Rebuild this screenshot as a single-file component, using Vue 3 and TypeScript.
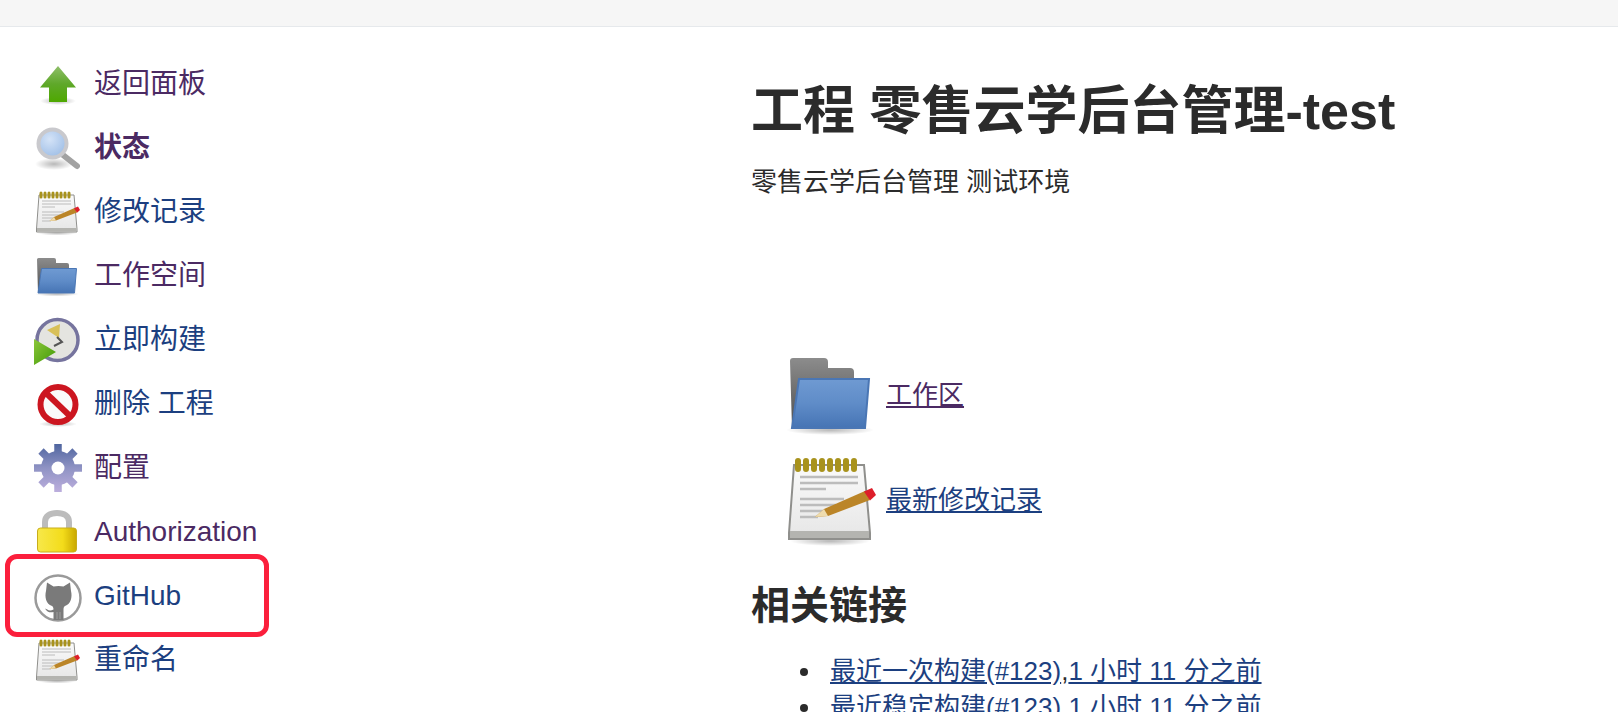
<template>
  <div class="page">
    <svg class="defs" width="0" height="0" aria-hidden="true">
      <defs>
        <linearGradient id="g-arrow" x1="0" y1="0" x2="0" y2="1">
          <stop offset="0" stop-color="#8fbf6a" />
          <stop offset="0.5" stop-color="#5fa82a" />
          <stop offset="1" stop-color="#4ea800" />
        </linearGradient>
        <linearGradient id="g-folder" x1="0" y1="0" x2="0" y2="1">
          <stop offset="0" stop-color="#6f9ad2" />
          <stop offset="0.5" stop-color="#5f8cc8" />
          <stop offset="1" stop-color="#4674b4" />
        </linearGradient>
        <linearGradient id="g-back" x1="0" y1="0" x2="0" y2="1">
          <stop offset="0" stop-color="#8c8c8c" />
          <stop offset="1" stop-color="#4e4e4e" />
        </linearGradient>
        <linearGradient id="g-lock" x1="0" y1="0" x2="1" y2="0">
          <stop offset="0" stop-color="#f7e84a" />
          <stop offset="0.65" stop-color="#f3dc1a" />
          <stop offset="1" stop-color="#c9a800" />
        </linearGradient>
        <linearGradient id="g-gear" gradientUnits="userSpaceOnUse" x1="0" y1="1" x2="0" y2="49">
          <stop offset="0" stop-color="#4f659f" />
          <stop offset="0.5" stop-color="#8f93c4" />
          <stop offset="1" stop-color="#bcaedd" />
        </linearGradient>
        <linearGradient id="g-page" x1="0" y1="0" x2="0" y2="1">
          <stop offset="0" stop-color="#fafafa" />
          <stop offset="1" stop-color="#e6e6e6" />
        </linearGradient>
        <linearGradient id="g-play" x1="0" y1="0" x2="1" y2="1">
          <stop offset="0" stop-color="#8cc63a" />
          <stop offset="1" stop-color="#3f9a06" />
        </linearGradient>
        <radialGradient id="g-lens" cx="0.4" cy="0.35" r="0.7">
          <stop offset="0" stop-color="#d4e3f7" />
          <stop offset="1" stop-color="#9dbde6" />
        </radialGradient>
        <radialGradient id="g-shadow">
          <stop offset="0" stop-color="#000" stop-opacity="0.28" />
          <stop offset="1" stop-color="#000" stop-opacity="0" />
        </radialGradient>

        <symbol id="i-up" viewBox="0 0 48 48" overflow="visible">
          <ellipse cx="24" cy="42" rx="18" ry="4" fill="url(#g-shadow)" />
          <path d="M24 7 42 28.500H33V43H15V28.500H6Z" fill="url(#g-arrow)" />
        </symbol>
        <symbol id="i-search" viewBox="0 0 48 48" overflow="visible">
          <ellipse cx="20" cy="41" rx="19" ry="6" fill="url(#g-shadow)" />
          <path d="M29 32 43 43" stroke="#a2a2a2" stroke-width="6" stroke-linecap="round" />
          <circle cx="18.500" cy="20.500" r="14" fill="url(#g-lens)" stroke="#c9c9cd" stroke-width="4" />
        </symbol>
        <symbol id="i-note" viewBox="0 0 48 48" overflow="visible">
          <ellipse cx="23" cy="46" rx="20" ry="2.500" fill="url(#g-shadow)" />
          <path d="M5 8H40L43 42V45H2.500V42Z" fill="url(#g-page)" stroke="#8f8f8c" />
          <path d="M3 41H42.500V44.500H3Z" fill="#b4b4b0" />
          <path d="M7 6V10M11 6V10M15 6V10M19 6V10M23 6V10M27 6V10M31 6V10M35 6V10"
            stroke="#a8921c" stroke-width="3" stroke-linecap="round" />
          <path d="M8 14H37M8 17H37M8 20H21M8 25H30M8 28H26M8 31H22M8 34H17" stroke="#bcbcbc" stroke-width="1.200" />
          <path d="M15.500 34 20 30 40.500 21 43 25.500 22 33.500Z" fill="#bb8528" />
          <path d="M15.500 34 20 30 22 33.500Z" fill="#efdcae" />
          <path d="M40 21.200 44 19.500 46 23 43 25.700Z" fill="#dd1e2a" />
        </symbol>
        <symbol id="i-folder" viewBox="0 0 48 48" overflow="visible">
          <ellipse cx="23" cy="43" rx="22" ry="2.500" fill="url(#g-shadow)" />
          <path d="M3 8.500Q3 7 4.500 7H20Q22 7 22 9V12H33Q35 12 35 14V42H4Z" fill="url(#g-back)" />
          <path d="M7.500 17.500H42.500L40.500 42H4Z" fill="url(#g-folder)" stroke="#4a76b4" stroke-width="1" />
        </symbol>
        <symbol id="i-build" viewBox="0 0 48 48" overflow="visible">
          <circle cx="23.500" cy="25" r="20.500" fill="#e4e4e0" stroke="#76749e" stroke-width="3.500" />
          <path d="M13 15 26 9 25 23Z" fill="#d8c058" />
          <path d="M23 22 28 27 20 31" fill="none" stroke="#555" stroke-width="2" />
          <path d="M0 24 22 37 0 50Z" fill="url(#g-play)" />
        </symbol>
        <symbol id="i-stop" viewBox="0 0 48 48" overflow="visible">
          <ellipse cx="24" cy="45" rx="19" ry="3" fill="url(#g-shadow)" />
          <circle cx="24" cy="25.500" r="17.500" fill="#fafafa" stroke="#cc1620" stroke-width="6" />
          <path d="M12 14 36 37" stroke="#cc1620" stroke-width="6" />
        </symbol>
        <symbol id="i-gear" viewBox="0 0 48 48" overflow="visible">
          <circle cx="24" cy="25" r="17" fill="url(#g-gear)" />
          <path d="M24 1V49M0 25H48M7 8 41 42M41 8 7 42" stroke="url(#g-gear)" stroke-width="7.500" />
          <circle cx="24" cy="25" r="6.500" fill="#fff" />
        </symbol>
        <symbol id="i-lock" viewBox="0 0 48 48" overflow="visible">
          <path d="M11 23V15C11 9 16 6 23 6 30 6 35 9 35 15V23" fill="none" stroke="#bcbcbc" stroke-width="6" />
          <rect x="3.500" y="21" width="39" height="24" rx="3" fill="url(#g-lock)" stroke="#c8ad1c" />
        </symbol>
        <symbol id="i-github" viewBox="0 0 48 48" overflow="visible">
          <circle cx="24" cy="27" r="22.500" fill="#fff" stroke="#9a9a9a" stroke-width="2.500" />
          <path d="M13 11.500 19.500 15.500C22.500 14.800 26.500 14.800 29.500 15.500L36 11.500 37 20C38.500 26 37 33 31 35 30 35.500 29.500 37 29.500 38V49H19.500V41C16 42 13 41 11 37.500 13 38 15 41 19.500 38.500 19.500 37 19 35.500 18 35 12 33 10.500 26 12 20Z"
            fill="#7a7a7a" />
          <path d="M23 41V48M26 41V48" stroke="#a8a8a8" stroke-width="0.800" />
        </symbol>
      </defs>
    </svg>

    <header class="topbar"></header>

    <div class="layout">
      <aside class="sidebar">
        <a
          v-for="item in tasks"
          :key="item.label"
          class="task"
          :class="{ visited: item.visited, current: item.current, latin: item.latin }"
        >
          <svg class="task-icon"><use :href="`#i-${item.icon}`" /></svg>
          <span>{{ item.label }}</span>
        </a>
        <div class="marker"></div>
      </aside>

      <main class="content">
        <h1>工程 零售云学后台管理-test</h1>
        <p class="desc">零售云学后台管理 测试环境</p>

        <div class="main-links">
          <div v-for="link in mainLinks" :key="link.label" class="main-link">
            <svg class="main-icon"><use :href="`#i-${link.icon}`" /></svg>
            <a :class="{ visited: link.visited }">{{ link.label }}</a>
          </div>
        </div>

        <h2>相关链接</h2>
        <ul>
          <li v-for="perma in permalinks" :key="perma.name">
            <a>{{ perma.name }}</a>,<a>{{ perma.time }}</a>
          </li>
        </ul>
      </main>
    </div>
  </div>
</template>

<script setup lang="ts">
interface Task {
  label: string
  icon: string
  visited?: boolean
  current?: boolean
  latin?: boolean
}

const tasks: Task[] = [
  { label: '返回面板', icon: 'up', visited: true },
  { label: '状态', icon: 'search', visited: true, current: true },
  { label: '修改记录', icon: 'note' },
  { label: '工作空间', icon: 'folder', visited: true },
  { label: '立即构建', icon: 'build' },
  { label: '删除 工程', icon: 'stop' },
  { label: '配置', icon: 'gear', visited: true },
  { label: 'Authorization', icon: 'lock', visited: true, latin: true },
  { label: 'GitHub', icon: 'github', latin: true },
  { label: '重命名', icon: 'note' },
]

const mainLinks = [
  { label: '工作区', icon: 'folder', visited: true },
  { label: '最新修改记录', icon: 'note', visited: false },
]

const permalinks = [
  { name: '最近一次构建(#123)', time: '1 小时 11 分之前' },
  { name: '最近稳定构建(#123)', time: '1 小时 11 分之前' },
]
</script>

<style>
html,
body {
  margin: 0;
  background: #fff;
  overflow: hidden;
}
</style>

<style scoped>
.page {
  height: 712px;
  overflow: hidden;
  font-family: "Liberation Sans", "Noto Sans CJK SC", sans-serif;
  color: #2b2b2b;
}

.defs {
  position: absolute;
}

.topbar {
  height: 26px;
  background: #f6f6f6;
  border-bottom: 1px solid #e6e9ec;
}

.layout {
  display: grid;
  grid-template-columns: 751px 1fr;
}

.sidebar {
  position: relative;
  display: flex;
  flex-direction: column;
  gap: 16px;
  padding: 32px 0 0 34px;
}

.task {
  display: flex;
  align-items: center;
  gap: 12px;
  height: 48px;
  font-size: 28px;
  color: #1c3f80;
}

.task span {
  padding-bottom: 4px;
}

.task.latin span {
  padding-top: 2px;
  padding-bottom: 0;
}

.task-icon {
  width: 48px;
  height: 48px;
  flex: none;
  overflow: visible;
  filter: blur(0.5px);
}

.visited {
  color: #4b2a63;
}

.current {
  font-weight: bold;
}

.marker {
  position: absolute;
  left: 5px;
  top: 527px;
  width: 254px;
  height: 73px;
  border: 5px solid #fb1f3c;
  border-radius: 12px;
}

.content {
  padding-top: 51px;
}

h1 {
  margin: 0;
  font-size: 52px;
  line-height: 66px;
  font-weight: bold;
}

.desc {
  margin: 20px 0 0;
  font-size: 26px;
  line-height: 36px;
}

.main-links {
  display: flex;
  flex-direction: column;
  gap: 9px;
  margin-top: 144px;
  padding-left: 33px;
}

.main-link {
  display: flex;
  align-items: center;
  height: 96px;
  font-size: 26px;
  color: #1c3f80;
}

.main-icon {
  width: 96px;
  height: 96px;
  flex: none;
  margin-right: 6px;
  overflow: visible;
  filter: blur(0.6px);
}

.main-link a {
  text-decoration: underline;
}

h2 {
  margin: 36px 0 0;
  font-size: 39px;
  line-height: 50px;
  font-weight: bold;
}

ul {
  margin: 22px 0 0;
  padding-left: 79px;
  list-style: none;
  font-size: 26px;
  line-height: 36px;
}

li {
  position: relative;
}

/* marker sits further from the text than the default disc */
li::before {
  content: "";
  position: absolute;
  left: -30px;
  top: 15px;
  width: 8px;
  height: 8px;
  border-radius: 50%;
  background: #2b2b2b;
}

li a {
  color: #1c3f80;
  text-decoration: underline;
}
</style>
